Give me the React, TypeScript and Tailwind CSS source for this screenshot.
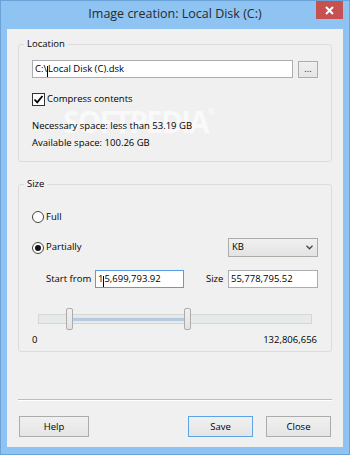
import React from "react";

const font = "font-['Open_Sans',sans-serif]";

function Btn({ label, primary, className = "" }: { label: string; primary?: boolean; className?: string }) {
  return (
    <button
      className={`h-[21px] bg-gradient-to-b from-[#f0f0f0] to-[#e5e5e5] text-[9.5px] leading-none text-black ${
        primary ? "border border-[#5ea3e6]" : "border border-[#acacac]"
      } ${className}`}
    >
      {label}
    </button>
  );
}

function Caret() {
  return <span className="inline-block h-[11px] w-px translate-y-[2px] bg-black" />;
}

function Slider() {
  return (
    <div className="relative ml-[6px] h-[22px] w-[274px]">
      <div className="absolute left-0 right-0 top-[6px] h-[10px] border border-[#d6d6d6] bg-[#e7eaea]" />
      <div className="absolute left-[35px] top-[9px] h-[4px] w-[111px] border-t border-[#dfe6ef] bg-[#b9cadf]" />
      <div className="absolute left-[28px] top-0 h-[22px] w-[7px] rounded-[2px] border border-[#acacac] bg-gradient-to-b from-[#f0f0f0] to-[#e3e3e3]" />
      <div className="absolute left-[146px] top-0 h-[22px] w-[7px] rounded-[2px] border border-[#acacac] bg-gradient-to-b from-[#f0f0f0] to-[#e3e3e3]" />
    </div>
  );
}

export default function App() {
  return (
    <div className={`flex h-[455px] w-[350px] flex-col border border-[#6aa3d8] bg-[#8ec3f2] ${font} text-black`}>
      {/* title bar */}
      <div className="flex h-[28px] shrink-0 items-start">
        <div className="w-[33px]" />
        <div className="flex-1 text-center text-[12.5px] leading-[26px] text-[#2b2b2b]">
          Image creation: Local Disk (C:)
        </div>
        <div className="mr-[6px] flex h-[18px] w-[27px] items-center justify-center bg-[#c75050]">
          <svg width="9" height="9" viewBox="0 0 9 9">
            <path d="M1 1 L8 8 M8 1 L1 8" stroke="white" strokeWidth="2" />
          </svg>
        </div>
      </div>

      {/* client area */}
      <div className="relative mx-[6px] flex h-[418px] shrink-0 flex-col bg-[#f0f0f0] px-[11px] pt-[8px] text-[9.5px]">
        {/* watermark, painted under the controls */}
        <div className="pointer-events-none absolute left-[56px] top-[78px] z-0 text-[30px] font-bold leading-none tracking-[-2px] text-white opacity-60">
          SOFTPEDIA<span className="align-top text-[9px]">®</span>
        </div>

        <fieldset className="relative z-10 rounded-[3px] border border-[#dcdcdc] px-[13px] pb-[10px] pt-[9px]">
          <legend className="ml-[-8px] px-[3px] leading-[14px]">Location</legend>
          <div className="flex items-center gap-[5px]">
            <div className="flex h-[18px] w-[261px] items-center border border-[#abadb3] bg-white px-[2px]">
              C:\<Caret />Local Disk (C).dsk
            </div>
            <button className="h-[17px] w-[20px] border border-[#acacac] bg-gradient-to-b from-[#f0f0f0] to-[#e5e5e5] leading-none text-[#1a1a4a]">
              ...
            </button>
          </div>
          <div className="mt-[15px] flex h-[13px] items-center gap-[2px]">
            <div className="flex h-[13px] w-[13px] items-center justify-center border border-[#333] bg-white">
              <svg width="11" height="11" viewBox="0 0 11 11">
                <path d="M1.5 5.5 L4.2 8.3 L9.5 2" fill="none" stroke="black" strokeWidth="1.8" />
              </svg>
            </div>
            <span>Compress contents</span>
          </div>
          <div className="mt-[11px] leading-[17px]">
            <div>Necessary space: less than 53.19 GB</div>
            <div>Available space: 100.26 GB</div>
          </div>
        </fieldset>

        <fieldset className="relative z-10 mt-[15px] rounded-[3px] border border-[#dcdcdc] px-[13px] pb-[3px] pt-[20px]">
          <legend className="ml-[-8px] px-[3px] leading-[14px]">Size</legend>
          <div className="flex h-[12px] items-center gap-[2px]">
            <div className="h-[12px] w-[12px] rounded-full border border-[#444] bg-white" />
            <span>Full</span>
          </div>
          <div className="mt-[15px] flex h-[19px] items-center justify-between">
            <div className="flex items-center gap-[2px]">
              <div className="flex h-[12px] w-[12px] items-center justify-center rounded-full border border-[#444] bg-white">
                <div className="h-[6px] w-[6px] rounded-full bg-[#111]" />
              </div>
              <span>Partially</span>
            </div>
            <div className="flex h-[19px] w-[90px] items-center justify-between border border-[#acacac] bg-gradient-to-b from-[#f0f0f0] to-[#e3e3e3] pl-[3px] pr-[4px]">
              <span>KB</span>
              <svg width="7" height="5" viewBox="0 0 7 5">
                <path d="M0.5 0.8 L3.5 3.8 L6.5 0.8" fill="none" stroke="#444" strokeWidth="1.3" />
              </svg>
            </div>
          </div>
          <div className="mt-[13px] flex h-[18px] items-center pl-[14px]">
            <span className="w-[49px]">Start from</span>
            <div className="flex h-[18px] w-[89px] items-center border border-[#569de5] bg-white px-[2px]">
              1<Caret />5,699,793.92
            </div>
            <span className="ml-[22px] w-[22px]">Size</span>
            <div className="flex h-[18px] w-[90px] items-center border border-[#abadb3] bg-white px-[2px]">
              55,778,795.52
            </div>
          </div>
          <div className="mt-[20px]">
            <Slider />
          </div>
          <div className="mt-[2px] flex justify-between pr-[1px] leading-[16px]">
            <span>0</span>
            <span>132,806,656</span>
          </div>
        </fieldset>

        <div className="mt-[47px] h-[2px] border-t border-b border-t-[#bdbdbd] border-b-[#ffffff]" />

        <div className="mt-[15px] flex px-[1px]">
          <Btn label="Help" className="w-[70px]" />
          <div className="flex-1" />
          <Btn label="Save" primary className="w-[65px]" />
          <Btn label="Close" className="ml-[13px] w-[65px]" />
        </div>
      </div>
    </div>
  );
}
